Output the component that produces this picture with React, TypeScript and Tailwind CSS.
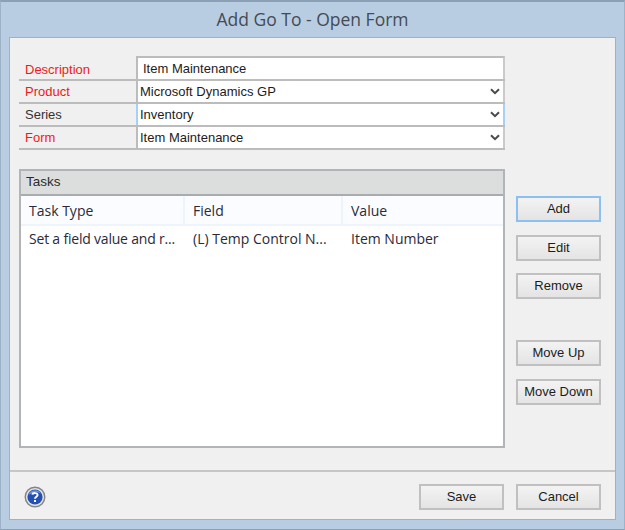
const sans = "font-['Liberation_Sans',sans-serif]"
const segoe = "font-['Open_Sans',sans-serif]"

const fields = [
  { label: 'Description', value: 'Item Maintenance', required: true, select: false },
  { label: 'Product', value: 'Microsoft Dynamics GP', required: true, select: true },
  { label: 'Series', value: 'Inventory', required: false, select: true, focused: true },
  { label: 'Form', value: 'Item Maintenance', required: true, select: true },
]

function Chevron() {
  return (
    <svg width="10" height="7" viewBox="0 0 10 7" className="shrink-0">
      <path d="M1 1.2 L5 5.2 L9 1.2" fill="none" stroke="#4a4a4a" strokeWidth="2" />
    </svg>
  )
}

function Button({ label, focused }: { label: string; focused?: boolean }) {
  return (
    <button
      className={`${sans} w-[85px] h-[26px] border-2 text-[13px] text-[#1c1c1c] bg-gradient-to-b from-[#f3f3f3] to-[#e4e4e4] ${
        focused ? 'border-[#8cc0ee]' : 'border-[#c0c0c0]'
      }`}
    >
      {label}
    </button>
  )
}

function HelpIcon() {
  return (
    <svg width="22" height="22" viewBox="0 0 22 22">
      <circle cx="11" cy="11" r="9.8" fill="#e4e4e4" stroke="#858585" strokeWidth="1.4" />
      <circle cx="11" cy="11" r="7.6" fill="#2450b4" />
      <path d="M4.5 9 A7 7 0 0 1 17 7.5 A12 12 0 0 0 4.5 9Z" fill="#6f8fd8" />
      <path d="M8.4 8.6 C8.6 6.6 13.6 6.4 13.6 9 C13.6 10.8 11 10.8 11 12.8" fill="none" stroke="#fff" strokeWidth="1.9" />
      <rect x="10" y="14" width="2" height="2" fill="#fff" />
    </svg>
  )
}

export default function App() {
  return (
    <div className="w-[625px] h-[530px] flex flex-col bg-[#b9cde2] border-t-2 border-x border-b border-x-[#9fb3c8] border-t-[#8ca0b5] border-b-[#8ca0b5] overflow-hidden">
      <div className={`${segoe} h-[35px] shrink-0 flex items-center justify-center text-[17.5px] text-[#444b55]`}>
        Add Go To - Open Form
      </div>

      <div className="mx-2 mb-[9px] flex-1 flex flex-col bg-[#f0f0f0] border border-[#9fb1c4]">
        <div className="flex-1 flex flex-col pl-[9px] pr-[14px] pt-[18px]">
          {/* Form fields */}
          <div className="w-[486px] border-b-2 border-[#bcbcbc]">
            {fields.map((f, i) => (
              <div key={f.label} className={`flex h-[23px] ${i > 0 ? 'border-t-2 border-[#bcbcbc]' : ''}`}>
                <div
                  className={`${sans} w-[117px] shrink-0 pl-[6px] flex items-center text-[13px] ${
                    i === 0 ? 'pt-[4px]' : 'pt-[1px]'
                  } ${f.required ? 'text-[#f01818]' : 'text-[#333]'}`}
                >
                  {f.label}
                </div>
                <div
                  className={`${sans} flex-1 flex items-center justify-between bg-white border-l-2 border-r-2 pr-[3px] text-[13px] text-[#1c1c1c] ${
                    f.focused ? 'border-[#a6d0f4]' : 'border-l-[#bcbcbc] border-r-[#cacaca]'
                  } ${f.select ? 'pl-[2px]' : 'pl-[5px] pt-[1px] border-t-2 border-t-[#bcbcbc]'}`}
                >
                  <span>{f.value}</span>
                  {f.select && <Chevron />}
                </div>
              </div>
            ))}
          </div>

          <div className="flex mt-[19px] gap-[11px]">
            {/* Tasks */}
            <div className="w-[486px] h-[279px] flex flex-col border-2 border-[#b2b5b8] bg-white">
              <div className={`${sans} h-[25px] shrink-0 flex items-center pl-[5px] text-[13.5px] text-[#2b2b2b] bg-[#dcdedd] border-b-2 border-[#a9acae]`}>
                Tasks
              </div>
              <div className={`${segoe} text-[14px] text-[#2a2a3a]`}>
                <div className="flex h-[30px] bg-[#fafcff] border-b-2 border-[#eef4fb]">
                  <div className="w-[164px] pl-[8px] flex items-center border-r-2 border-[#eef4fb]">Task Type</div>
                  <div className="w-[158px] pl-[8px] flex items-center border-r-2 border-[#eef4fb]">Field</div>
                  <div className="flex-1 pl-[8px] flex items-center">Value</div>
                </div>
                <div className="flex h-[24px] items-center">
                  <div className="w-[164px] pl-[8px] whitespace-nowrap tracking-[-0.2px]">Set a field value and r...</div>
                  <div className="w-[158px] pl-[8px] whitespace-nowrap">(L) Temp Control N...</div>
                  <div className="flex-1 pl-[8px]">Item Number</div>
                </div>
              </div>
            </div>

            {/* Side buttons */}
            <div className="flex flex-col pt-[27px]">
              <div className="flex flex-col gap-[12.5px]">
                <Button label="Add" focused />
                <Button label="Edit" />
                <Button label="Remove" />
              </div>
              <div className="flex flex-col gap-[13px] mt-[41px]">
                <Button label="Move Up" />
                <Button label="Move Down" />
              </div>
            </div>
          </div>
        </div>

        {/* Footer */}
        <div className="h-[49px] shrink-0 flex items-center justify-between pl-[14px] pr-[14px] pt-[2px] border-t-2 border-[#c6c6c6]">
          <HelpIcon />
          <div className="flex gap-[12px]">
            <Button label="Save" />
            <Button label="Cancel" />
          </div>
        </div>
      </div>
    </div>
  )
}
